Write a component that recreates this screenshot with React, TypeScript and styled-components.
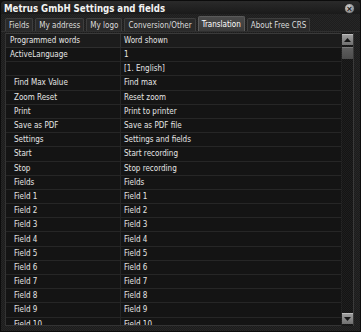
import styled, { createGlobalStyle } from 'styled-components'

const GlobalStyle = createGlobalStyle`
  html, body {
    margin: 0;
    padding: 0;
    background: #111;
  }
  body {
    font-family: 'DejaVu Sans Condensed', 'Liberation Sans', sans-serif;
  }
`

interface Row {
  word: string
  shown: string
  nested?: boolean
}

const tabs = ['Fields', 'My address', 'My logo', 'Conversion/Other', 'Translation', 'About Free CRS']
const activeTab = 'Translation'

const rows: Row[] = [
  { word: 'ActiveLanguage', shown: '1' },
  { word: '', shown: '[1. English]' },
  { word: 'Find Max Value', shown: 'Find max', nested: true },
  { word: 'Zoom Reset', shown: 'Reset zoom', nested: true },
  { word: 'Print', shown: 'Print to printer', nested: true },
  { word: 'Save as PDF', shown: 'Save as PDF file', nested: true },
  { word: 'Settings', shown: 'Settings and fields', nested: true },
  { word: 'Start', shown: 'Start recording', nested: true },
  { word: 'Stop', shown: 'Stop recording', nested: true },
  { word: 'Fields', shown: 'Fields', nested: true },
  ...Array.from({ length: 10 }, (_, i) => ({ word: `Field ${i + 1}`, shown: `Field ${i + 1}`, nested: true }))
]

const Arrow = ({ down }: { down?: boolean }) => (
  <svg width="7" height="4" viewBox="0 0 7 4">
    <path d={down ? 'M0 0h7L3.5 4z' : 'M0 4h7L3.5 0z'} fill="#161616" />
  </svg>
)

export default function App() {
  return (
    <>
      <GlobalStyle />
      <Window>
        <TitleBar>
          <Title>Metrus GmbH Settings and fields</Title>
          <CloseButton>×</CloseButton>
        </TitleBar>
        <TabStrip>
          {tabs.map((t) => (
            <Tab key={t} $active={t === activeTab}>
              {t}
            </Tab>
          ))}
        </TabStrip>
        <Body>
          <Grid>
            <HeaderRow>
              <HeaderCell>Programmed words</HeaderCell>
              <HeaderCell $right>Word shown</HeaderCell>
            </HeaderRow>
            {rows.map((r, i) => (
              <GridRow key={i}>
                <Cell $nested={r.nested}>{r.word}</Cell>
                <Cell $right>{r.shown}</Cell>
              </GridRow>
            ))}
          </Grid>
          <ScrollBar>
            <ScrollButton>
              <Arrow />
            </ScrollButton>
            <Thumb />
            <Track />
            <ScrollButton>
              <Arrow down />
            </ScrollButton>
          </ScrollBar>
        </Body>
      </Window>
    </>
  )
}

const Window = styled.div`
  width: 361px;
  height: 332px;
  box-sizing: border-box;
  display: flex;
  flex-direction: column;
  background: #1b1b1b;
  border-radius: 5px 5px 0 0;
  border: 1px solid #0c0c0c;
  overflow: hidden;
  color: #e6e6e6;
  font-size: 8px;
`

const TitleBar = styled.div`
  height: 13px;
  flex: 0 0 auto;
  display: flex;
  align-items: center;
  justify-content: space-between;
  padding: 0 5px 0 3px;
  background: linear-gradient(#2a2a2a, #1a1a1a);
`

const Title = styled.span`
  font-family: 'DejaVu Sans Condensed', 'Liberation Sans', sans-serif;
  font-weight: bold;
  font-size: 9.6px;
  color: #f2f2f2;
  margin-top: 1px;
`

const CloseButton = styled.span`
  width: 11px;
  height: 11px;
  margin-top: 2px;
  box-sizing: border-box;
  border-radius: 50%;
  border: 1px solid #2a2a2a;
  background: radial-gradient(circle at 40% 35%, #d6d6d6, #8a8a8a 70%);
  color: #1a1a1a;
  font-family: 'Liberation Sans', sans-serif;
  font-weight: bold;
  font-size: 9px;
  line-height: 8px;
  display: flex;
  align-items: center;
  justify-content: center;
`

const TabStrip = styled.div`
  height: 18px;
  flex: 0 0 auto;
  display: flex;
  align-items: flex-end;
  gap: 2px;
  padding: 0 4px;
  box-sizing: border-box;
  background: repeating-conic-gradient(#262626 0 25%, #1e1e1e 0 50%) 0 0 / 2px 2px;
  border-bottom: 1px solid #303030;
`

const Tab = styled.div<{ $active: boolean }>`
  height: ${(p) => (p.$active ? '15px' : '13px')};
  box-sizing: border-box;
  padding: 0 3px;
  display: flex;
  align-items: center;
  border: 1px solid ${(p) => (p.$active ? '#5a5a5a' : '#3e3e3e')};
  border-bottom: none;
  border-radius: 2px 2px 0 0;
  background: ${(p) => (p.$active ? 'linear-gradient(#4a4a4a, #3a3a3a)' : '#2a2a2a')};
  color: ${(p) => (p.$active ? '#ffffff' : '#dcdcdc')};
  font-size: 8px;
  white-space: nowrap;
`

const Body = styled.div`
  flex: 1;
  min-height: 0;
  display: flex;
  padding: 1px 6px 5px 4px;
  gap: 1px;
  background: repeating-conic-gradient(#262626 0 25%, #1c1c1c 0 50%) 0 0 / 2px 2px;
`

const Grid = styled.div`
  flex: 1;
  min-width: 0;
  overflow: hidden;
  background: #141414;
  border-left: 1px solid #333;
  border-bottom: 1px solid #333;
`

const HeaderRow = styled.div`
  display: grid;
  grid-template-columns: 114px 1fr;
  height: 15px;
  box-sizing: border-box;
  background: #1c1c1c;
  border-top: 1px solid #3a3a3a;
  border-bottom: 1px solid #2e2e2e;
`

const GridRow = styled.div`
  display: grid;
  grid-template-columns: 114px 1fr;
  height: 14.2px;
  box-sizing: border-box;
  border-bottom: 1px solid #262626;
`

const HeaderCell = styled.div<{ $right?: boolean }>`
  display: flex;
  align-items: center;
  padding-left: ${(p) => (p.$right ? '3px' : '4px')};
  border-left: ${(p) => (p.$right ? '1px solid #333' : 'none')};
  font-size: 8px;
  color: #e6e6e6;
  white-space: nowrap;
`

const Cell = styled.div<{ $right?: boolean; $nested?: boolean }>`
  display: flex;
  align-items: center;
  padding-left: ${(p) => (p.$right ? '3px' : p.$nested ? '8px' : '4px')};
  border-left: ${(p) => (p.$right ? '1px solid #262626' : 'none')};
  font-size: 8px;
  color: #e6e6e6;
  white-space: nowrap;
  overflow: hidden;
`

const ScrollBar = styled.div`
  width: 12px;
  flex: 0 0 auto;
  display: flex;
  flex-direction: column;
  align-items: center;
  padding: 1px 0 2px;
  box-sizing: border-box;
  background: repeating-conic-gradient(#1e1e1e 0 25%, #141414 0 50%) 0 0 / 2px 2px;
  border-right: 1px solid #3a3a3a;
`

const ScrollButton = styled.div`
  width: 11px;
  height: 11px;
  flex: 0 0 auto;
  box-sizing: border-box;
  display: flex;
  align-items: center;
  justify-content: center;
  border-top: 1px solid #bdbdbd;
  background: linear-gradient(#9c9c9c, #707070);
`

const Thumb = styled.div`
  width: 11px;
  height: 12px;
  margin-top: 2px;
  flex: 0 0 auto;
  box-sizing: border-box;
  border-top: 1px solid #7a7a7a;
  background: linear-gradient(#5e5e5e, #4c4c4c);
`

const Track = styled.div`
  flex: 1;
`
